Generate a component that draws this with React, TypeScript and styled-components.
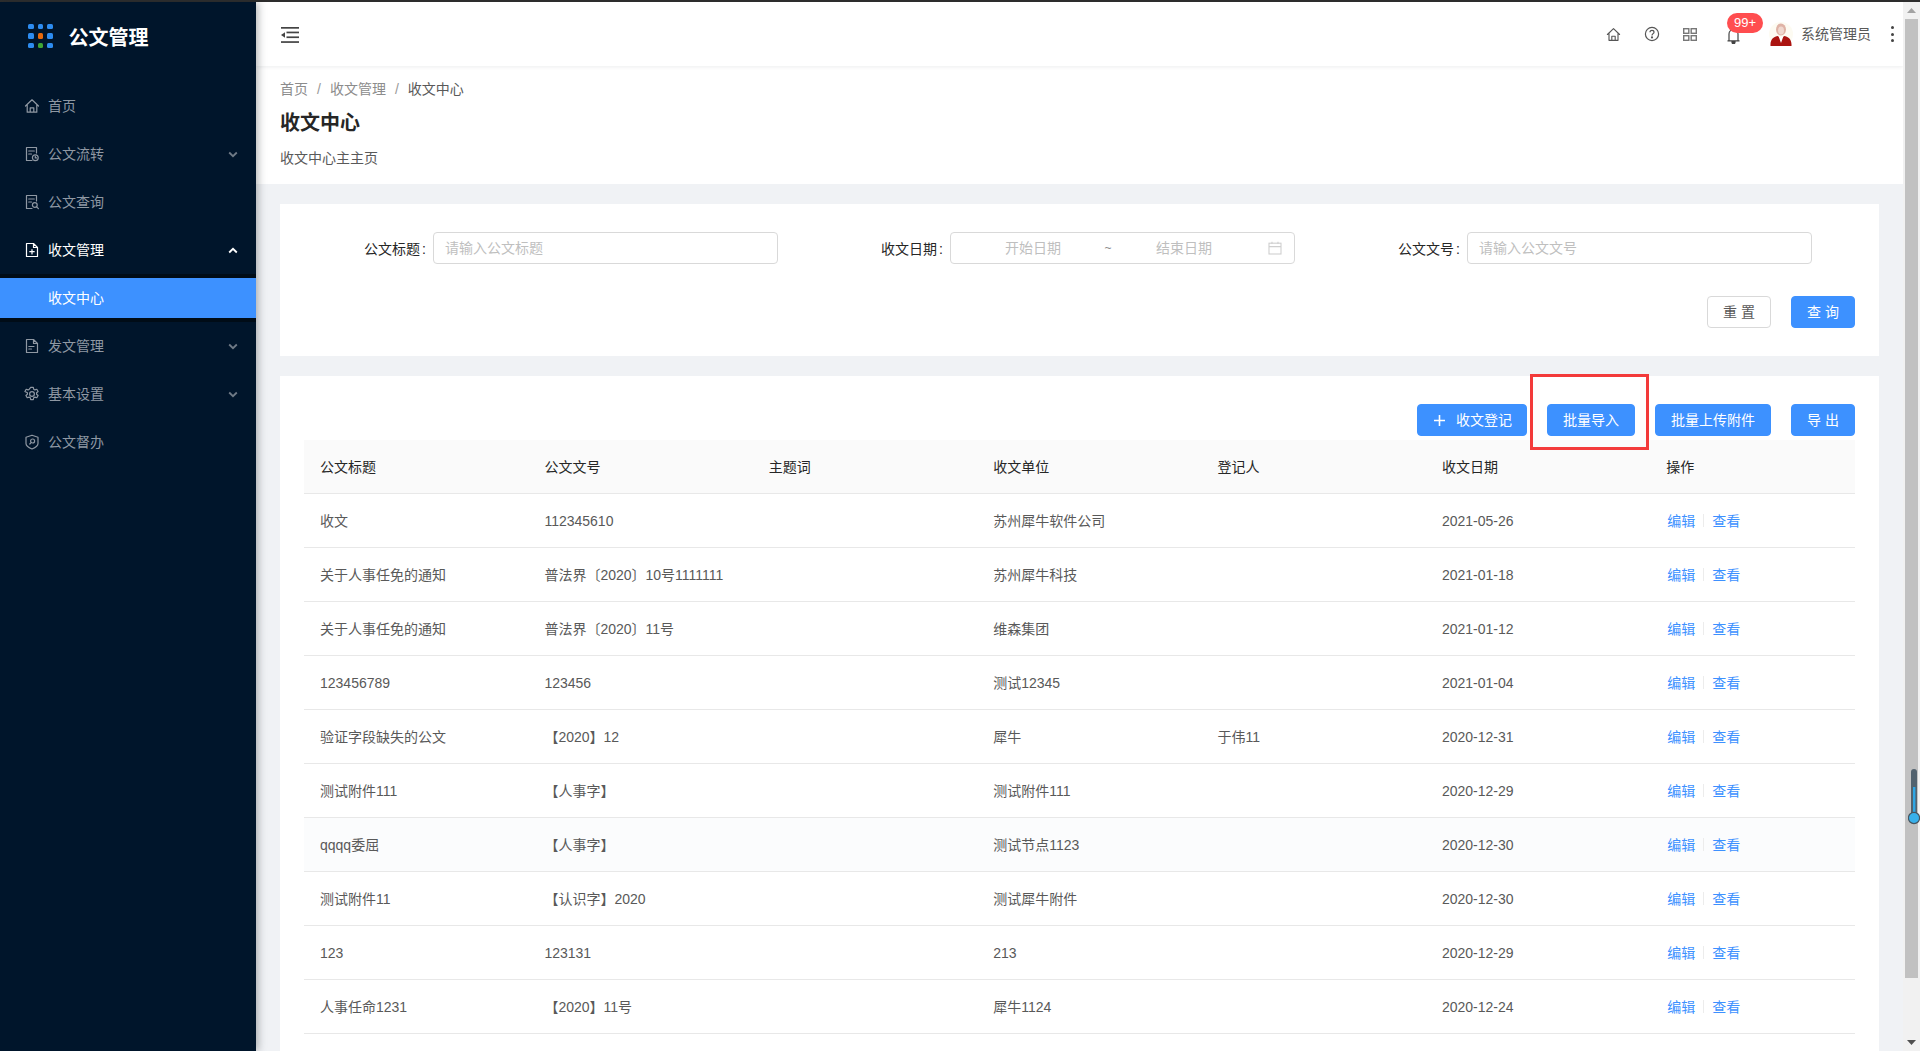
import React from "react";
import styled, { createGlobalStyle } from "styled-components";

const Global = createGlobalStyle`
  html, body { margin: 0; padding: 0; height: 100%; overflow: hidden; background: #fff; }
  body { font-family: "Liberation Sans", "Noto Sans CJK SC", sans-serif; font-size: 14px; color: #595959; }
  #root { height: 100%; }
  * { box-sizing: border-box; }
`;

const Blue = "#3d91ff";

const Shell = styled.div`display:flex;flex-direction:column;height:1051px;overflow:hidden;`;
const TopLine = styled.div`height:2px;background:#2e2e2e;flex:none;`;
const Body = styled.div`display:flex;flex:1;min-height:0;position:relative;`;

const Sidebar = styled.aside`
  width:256px;flex:none;background:#00152b;box-shadow:2px 0 8px rgba(29,35,41,.35);position:relative;z-index:2;
  display:flex;flex-direction:column;
`;
const Brand = styled.div`display:flex;align-items:center;height:80px;padding:0 0 12px 28px;gap:16px;flex:none;`;
const BrandTitle = styled.div`color:#fff;font-size:20px;font-weight:700;line-height:28px;margin-top:4px;`;
const Dots = styled.div`display:grid;grid-template-columns:repeat(3,5.5px);grid-auto-rows:5.5px;gap:4px;`;
const Dot = styled.i<{ $c: string }>`display:block;border-radius:1.5px;background:${p => p.$c};`;

const Item = styled.div<{ $on?: boolean }>`
  display:flex;align-items:center;height:40px;margin:4px 0;padding-left:24px;flex:none;
  color:${p => (p.$on ? "#fff" : "#8f98a3")};line-height:22px;
`;
const IconSlot = styled.span`display:flex;width:16px;height:16px;margin-right:8px;flex:none;align-items:center;justify-content:center;`;
const Chevron = styled.span`margin-left:auto;margin-right:18px;display:flex;`;
const SubMenu = styled.div`background:#000c17;padding:4px 0;flex:none;`;
const SubItem = styled.div`height:40px;background:${Blue};color:#fff;padding-left:48px;line-height:40px;`;

const Main = styled.main`flex:1;min-width:0;display:flex;flex-direction:column;background:#f0f2f5;`;
const Header = styled.header`
  height:64px;flex:none;background:#fff;display:flex;align-items:center;padding:0 8px 0 25px;
  box-shadow:0 1px 4px rgba(0,21,41,.08);position:relative;z-index:1;
`;
const Collapse = styled.svg`margin-top:2px;flex:none;`;
const Tools = styled.div`margin-left:auto;display:flex;align-items:center;height:100%;`;
const Tool = styled.span<{ $w: number }>`display:flex;width:${p => p.$w}px;justify-content:center;align-items:center;color:#555;`;
const BellWrap = styled.span`display:flex;position:relative;width:36px;justify-content:center;margin-left:6px;margin-top:4px;`;
const Badge = styled.span`
  position:absolute;left:12px;top:-15px;width:36px;height:20px;border-radius:10px;background:#ff4d4f;color:#fff;
  font-size:13px;line-height:20px;text-align:center;
`;
const Avatar = styled.svg`margin-left:18px;flex:none;`;
const UserName = styled.span`color:#595959;margin-left:8px;margin-top:-2px;white-space:nowrap;`;
const Kebab = styled.span`display:flex;flex-direction:column;gap:3.5px;margin-left:20px;margin-right:1px;`;
const KDot = styled.i`display:block;width:3px;height:3px;border-radius:50%;background:#444;`;

const PageHead = styled.section`height:118px;flex:none;background:#fff;padding:12px 24px 0;`;
const Crumbs = styled.div`line-height:22px;color:#8c8c8c;display:flex;`;
const Sep = styled.span`margin:0 9px;color:#999;`;
const CrumbNow = styled.span`color:#595959;`;
const PageTitle = styled.h1`margin:9px 0 0;font-size:20px;line-height:28px;font-weight:700;color:#262626;`;
const PageDesc = styled.p`margin:10px 0 0;line-height:22px;color:#595959;`;

const Content = styled.div`flex:1;min-height:0;padding:20px 24px 0;display:flex;flex-direction:column;gap:20px;`;
const Card = styled.section`background:#fff;position:relative;`;
const FilterCard = styled(Card)`height:152px;padding:28px 24px 0 84px;flex:none;`;
const Fields = styled.div`display:grid;grid-template-columns:repeat(3,414px);column-gap:103px;`;
const Field = styled.div`display:flex;align-items:center;height:32px;`;
const Label = styled.label`width:69px;padding-right:7px;text-align:right;color:#262626;white-space:nowrap;flex:none;`;
const Colon = styled.span`margin-left:2px;`;
const Input = styled.div`
  width:345px;height:32px;border:1px solid #d9d9d9;border-radius:4px;padding:0 11px;line-height:30px;color:#bfbfbf;
`;
const Range = styled(Input)`display:flex;align-items:center;`;
const RangeText = styled.span<{ $w: number }>`width:${p => p.$w}px;text-align:center;`;
const RangeSep = styled.span`width:8px;text-align:center;color:#8c8c8c;font-size:12px;`;
const Cal = styled.span`display:flex;margin-left:12px;`;
const Actions = styled.div`display:flex;justify-content:flex-end;gap:20px;margin-top:32px;`;
const Btn = styled.button<{ $ghost?: boolean }>`
  height:32px;padding:0 15px;border-radius:4px;font:inherit;font-size:14px;line-height:30px;white-space:nowrap;
  border:1px solid ${p => (p.$ghost ? "#d9d9d9" : Blue)};
  background:${p => (p.$ghost ? "#fff" : Blue)};color:${p => (p.$ghost ? "#595959" : "#fff")};
  display:flex;align-items:center;justify-content:center;
`;
const AddBtn = styled(Btn)`padding:0 14px 0 16px;justify-content:flex-start;`;
const Wide = styled(Btn)`width:64px;padding:0;letter-spacing:4px;text-indent:4px;`;
const Plus = styled.span`display:flex;margin-right:11px;`;
const TableCard = styled(Card)`flex:1;padding:28px 24px 0;`;
const Toolbar = styled.div`display:flex;justify-content:flex-end;gap:20px;margin-bottom:4px;`;
const Highlight = styled.div`
  position:absolute;left:1250px;top:-2px;width:119px;height:76px;border:3px solid #f33a3a;pointer-events:none;
`;
const HeadRow = styled.div`
  display:grid;grid-template-columns:repeat(6,224.4px) 1fr;height:54px;background:#fafafa;border-bottom:1px solid #e8e8e8;
  align-items:center;color:#262626;
`;
const Row = styled.div<{ $hover?: boolean }>`
  display:grid;grid-template-columns:repeat(6,224.4px) 1fr;height:54px;border-bottom:1px solid #e8e8e8;align-items:center;
  background:${p => (p.$hover ? "#fbfcfd" : "#fff")};
`;
const Cell = styled.div`padding-left:16px;white-space:nowrap;line-height:22px;`;
const Ops = styled(Cell)`display:flex;align-items:center;color:${Blue};padding-left:17px;`;
const OpDiv = styled.i`display:block;width:1px;height:13px;background:#ececec;margin:0 8px;`;

const Scrollbar = styled.div`width:17px;flex:none;background:#f1f1f1;position:relative;z-index:3;display:flex;flex-direction:column;`;
const ArrowCell = styled.div`height:17px;flex:none;display:flex;align-items:center;justify-content:center;`;
const Thumb = styled.div`height:959px;margin:0 2px;background:#c1c1c1;flex:none;`;
const TrackRest = styled.div`flex:1;`;
const Gauge = styled.svg`position:absolute;left:5px;top:766px;`;

const stroke = { fill: "none", stroke: "currentColor", strokeWidth: 1.2, strokeLinejoin: "round" as const, strokeLinecap: "round" as const };

const Ico = ({ children, s = 16, vb = 16 }: { children: React.ReactNode; s?: number; vb?: number }) => (
  <svg width={s} height={s} viewBox={`0 0 ${vb} ${vb}`} {...stroke}>{children}</svg>
);

const HomeI = ({ s = 16 }: { s?: number }) => (
  <Ico s={s}><path d="M1.5 8 8 1.8 14.5 8M3.2 6.8V14.2H12.8V6.8M6.2 14.2V9.8H9.8V14.2" /></Ico>
);
const DocClock = () => (
  <Ico><path d="M8 14.5H2.5V1.5H12.5V7" /><path d="M4.7 5H10.3M4.7 8H7.5" /><circle cx="11.3" cy="11.8" r="2.9" /><path d="M11.3 10.4v1.5h1.2" /></Ico>
);
const DocSearch = () => (
  <Ico><path d="M8 14.5H2.5V1.5H12.5V7" /><path d="M4.7 5H10.3M4.7 8H7.5" /><circle cx="10.8" cy="11" r="2.4" /><path d="M12.6 12.8 14.4 14.6" /></Ico>
);
const DocPlus = () => (
  <Ico><path d="M9.5 1.5H2.5V14.5H13.5V5.5ZM9.5 1.5V5.5H13.5" /><path d="M8 7.5V11.9M5.8 9.7H10.2" /></Ico>
);
const DocMinus = () => (
  <Ico><path d="M9.5 1.5H2.5V14.5H13.5V5.5ZM9.5 1.5V5.5H13.5" /><path d="M4.8 8.5H10M4.8 11H7.5" /></Ico>
);
const Gear = () => (
  <Ico><path d="M6.7 1.3h2.6l.4 1.9 1.2.7 1.9-.6 1.3 2.2-1.5 1.3v1.4l1.5 1.3-1.3 2.2-1.9-.6-1.2.7-.4 1.9H6.7l-.4-1.9-1.2-.7-1.9.6-1.3-2.2 1.5-1.3V6.8L.9 5.5l1.3-2.2 1.9.6 1.2-.7z" /><circle cx="8" cy="8" r="2.4" /></Ico>
);
const Shield = () => (
  <Ico><path d="M8 1.2 14 3.2V9.5C14 12 11 13.8 8 15 5 13.8 2 12 2 9.5V3.2Z" /><circle cx="8.6" cy="7" r="2" /><path d="M7.1 8.6 5.8 10" /></Ico>
);
const Down = () => (
  <svg width="10" height="7" viewBox="0 0 10 7" fill="none" stroke="#6f7a86" strokeWidth="1.8"><path d="M1.2 1.5 5 5.2 8.8 1.5" /></svg>
);
const Up = () => (
  <svg width="10" height="7" viewBox="0 0 10 7" fill="none" stroke="#fff" strokeWidth="1.8"><path d="M1.2 5.5 5 1.8 8.8 5.5" /></svg>
);

const rows = [
  ["收文", "112345610", "", "苏州犀牛软件公司", "", "2021-05-26"],
  ["关于人事任免的通知", "普法界〔2020〕10号1111111", "", "苏州犀牛科技", "", "2021-01-18"],
  ["关于人事任免的通知", "普法界〔2020〕11号", "", "维森集团", "", "2021-01-12"],
  ["123456789", "123456", "", "测试12345", "", "2021-01-04"],
  ["验证字段缺失的公文", "【2020】12", "", "犀牛", "于伟11", "2020-12-31"],
  ["测试附件111", "【人事字】", "", "测试附件111", "", "2020-12-29"],
  ["qqqq委屈", "【人事字】", "", "测试节点1123", "", "2020-12-30"],
  ["测试附件11", "【认识字】2020", "", "测试犀牛附件", "", "2020-12-30"],
  ["123", "123131", "", "213", "", "2020-12-29"],
  ["人事任命1231", "【2020】11号", "", "犀牛1124", "", "2020-12-24"],
];
const heads = ["公文标题", "公文文号", "主题词", "收文单位", "登记人", "收文日期", "操作"];
const dotColors = ["#2d8cf0", "#2d8cf0", "#2d8cf0", "#2d8cf0", "#e8690b", "#2d8cf0", "#2d8cf0", "#3fa535", "#2d8cf0"];

export default function App() {
  return (
    <Shell>
      <Global />
      <TopLine />
      <Body>
        <Sidebar>
          <Brand>
            <Dots>{dotColors.map((c, i) => <Dot key={i} $c={c} />)}</Dots>
            <BrandTitle>公文管理</BrandTitle>
          </Brand>
          <Item><IconSlot><HomeI /></IconSlot>首页</Item>
          <Item><IconSlot><DocClock /></IconSlot>公文流转<Chevron><Down /></Chevron></Item>
          <Item><IconSlot><DocSearch /></IconSlot>公文查询</Item>
          <Item $on><IconSlot><DocPlus /></IconSlot>收文管理<Chevron><Up /></Chevron></Item>
          <SubMenu><SubItem>收文中心</SubItem></SubMenu>
          <Item><IconSlot><DocMinus /></IconSlot>发文管理<Chevron><Down /></Chevron></Item>
          <Item><IconSlot><Gear /></IconSlot>基本设置<Chevron><Down /></Chevron></Item>
          <Item><IconSlot><Shield /></IconSlot>公文督办</Item>
        </Sidebar>
        <Main>
          <Header>
            <Collapse width="18" height="16" viewBox="0 0 18 16" fill="#444">
              <rect x="0" y="0" width="18" height="1.7" />
              <rect x="5.5" y="4.6" width="12.5" height="1.7" />
              <rect x="5.5" y="9.4" width="12.5" height="1.7" />
              <rect x="0" y="14.2" width="18" height="1.7" />
              <path d="M0 8 4 5.2V10.8Z" />
            </Collapse>
            <Tools>
              <Tool $w={38}><HomeI s={15} /></Tool>
              <Tool $w={39}>
                <svg width="16" height="16" viewBox="0 0 16 16" fill="none" stroke="#555" strokeWidth="1.2">
                  <circle cx="8" cy="8" r="6.6" />
                  <path d="M6 6.3C6 5 7 4.4 8 4.4S10 5.1 10 6.2C10 7.6 8 7.7 8 9.4" />
                  <circle cx="8" cy="11.4" r=".5" fill="#555" />
                </svg>
              </Tool>
              <Tool $w={38}>
                <svg width="14" height="13" viewBox="0 0 14 13" fill="none" stroke="#777" strokeWidth="1.4">
                  <rect x=".7" y=".7" width="5.1" height="4.6" /><rect x="8.2" y=".7" width="5.1" height="4.6" />
                  <rect x=".7" y="7.7" width="5.1" height="4.6" /><rect x="8.2" y="7.7" width="5.1" height="4.6" />
                </svg>
              </Tool>
              <BellWrap>
                <svg width="13" height="16" viewBox="0 0 13 16" fill="none" stroke="#444" strokeWidth="1.2">
                  <path d="M2 12.5V6C2 3.5 4 1.7 6.5 1.7S11 3.5 11 6V12.5M.5 12.8H12.5" />
                  <path d="M5 13v1.2a1.5 1.5 0 0 0 3 0V13" fill="#444" />
                </svg>
                <Badge>99+</Badge>
              </BellWrap>
              <Avatar width="24" height="24" viewBox="0 0 24 24">
                <circle cx="12" cy="12" r="12" fill="#fdfbf2" />
                <ellipse cx="12" cy="7.5" rx="5" ry="6" fill="#dfb3a6" />
                <ellipse cx="12" cy="8.5" rx="3" ry="4" fill="#f0d8cf" />
                <path d="M1.5 24C1 17 5 14.5 9 14L12 17 15 14C19 14.5 23 17 22.5 24Z" fill="#ab1410" />
                <path d="M9.5 14 12 21 14.5 14 12 15.5Z" fill="#fff" />
              </Avatar>
              <UserName>系统管理员</UserName>
              <Kebab><KDot /><KDot /><KDot /></Kebab>
            </Tools>
          </Header>
          <PageHead>
            <Crumbs>首页<Sep>/</Sep>收文管理<Sep>/</Sep><CrumbNow>收文中心</CrumbNow></Crumbs>
            <PageTitle>收文中心</PageTitle>
            <PageDesc>收文中心主主页</PageDesc>
          </PageHead>
          <Content>
            <FilterCard>
              <Fields>
                <Field><Label>公文标题<Colon>:</Colon></Label><Input>请输入公文标题</Input></Field>
                <Field>
                  <Label>收文日期<Colon>:</Colon></Label>
                  <Range>
                    <RangeText $w={142}>开始日期</RangeText>
                    <RangeSep>~</RangeSep>
                    <RangeText $w={144}>结束日期</RangeText>
                    <Cal>
                      <svg width="14" height="14" viewBox="0 0 14 14" fill="none" stroke="#cfcfcf" strokeWidth="1.1">
                        <rect x="1" y="2.2" width="12" height="10.8" /><path d="M1 5.6H13M4 .8V3M10 .8V3" />
                      </svg>
                    </Cal>
                  </Range>
                </Field>
                <Field><Label>公文文号<Colon>:</Colon></Label><Input>请输入公文文号</Input></Field>
              </Fields>
              <Actions>
                <Wide $ghost>重置</Wide>
                <Wide>查询</Wide>
              </Actions>
            </FilterCard>
            <TableCard>
              <Highlight />
              <Toolbar>
                <AddBtn>
                  <Plus>
                    <svg width="11" height="11" viewBox="0 0 11 11" stroke="#fff" strokeWidth="1.6"><path d="M5.5 0V11M0 5.5H11" /></svg>
                  </Plus>
                  收文登记
                </AddBtn>
                <Btn>批量导入</Btn>
                <Btn>批量上传附件</Btn>
                <Wide>导出</Wide>
              </Toolbar>
              <HeadRow>{heads.map(h => <Cell key={h}>{h}</Cell>)}</HeadRow>
              {rows.map((r, i) => (
                <Row key={i} $hover={i === 6}>
                  {r.map((c, j) => <Cell key={j}>{c}</Cell>)}
                  <Ops>编辑<OpDiv />查看</Ops>
                </Row>
              ))}
            </TableCard>
          </Content>
        </Main>
        <Scrollbar>
          <ArrowCell>
            <svg width="9" height="5" viewBox="0 0 9 5" fill="#a3a3a3"><path d="M0 5 4.5 0 9 5Z" /></svg>
          </ArrowCell>
          <Thumb />
          <TrackRest />
          <ArrowCell>
            <svg width="9" height="5" viewBox="0 0 9 5" fill="#505050"><path d="M0 0 4.5 5 9 0Z" /></svg>
          </ArrowCell>
          <Gauge width="12" height="60" viewBox="0 0 12 60">
            <rect x="3" y="1" width="6" height="50" rx="3" fill="#52626e" />
            <rect x="5" y="19" width="2.4" height="32" fill="#2ea6e4" />
            <circle cx="6" cy="50" r="5.6" fill="#38b0ea" stroke="#47555f" strokeWidth="1.2" />
          </Gauge>
        </Scrollbar>
      </Body>
    </Shell>
  );
}
